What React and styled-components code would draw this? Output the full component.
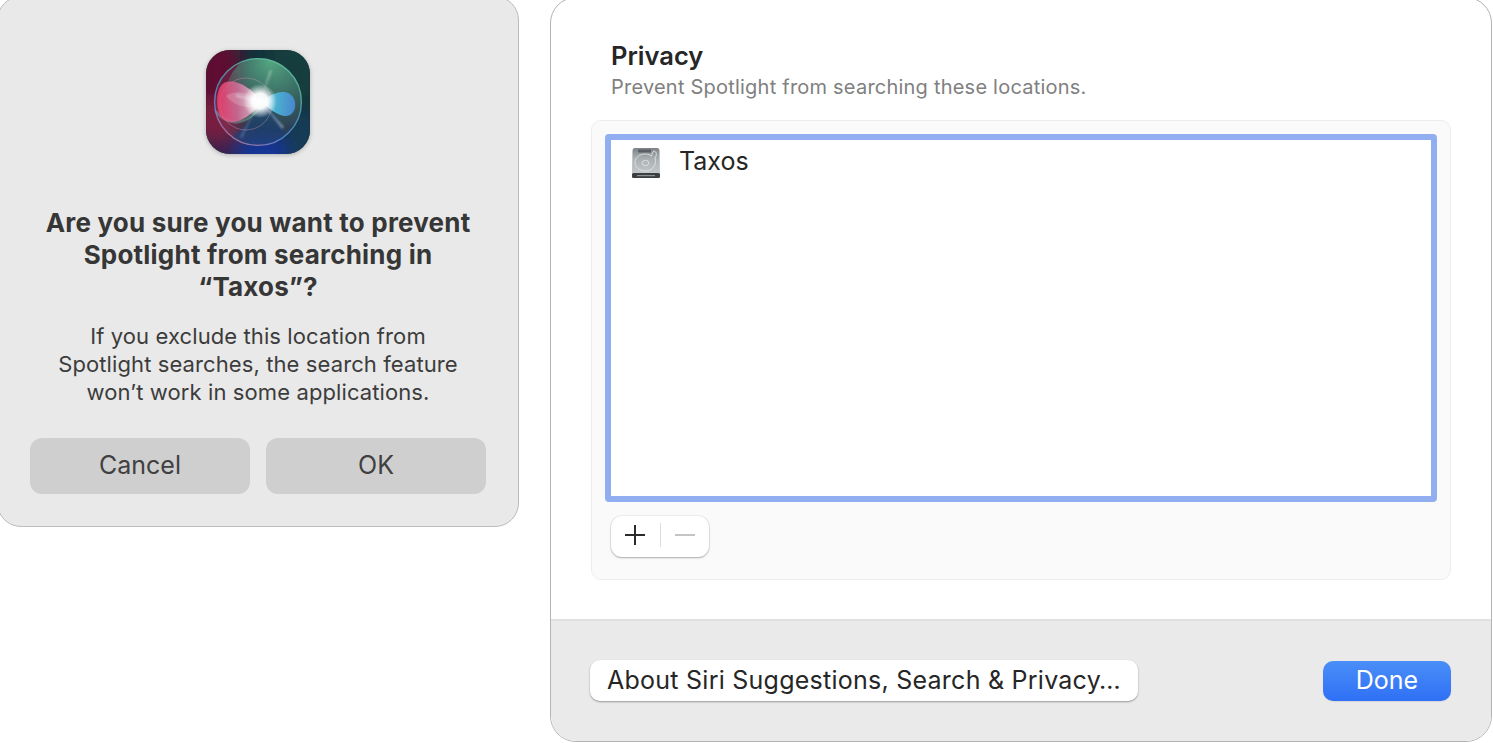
import React from 'react';
import styled, { createGlobalStyle } from 'styled-components';

const GlobalStyle = createGlobalStyle`
  html, body {
    margin: 0;
    padding: 0;
    background: #ffffff;
    overflow: hidden;
  }
  body {
    font-family: 'Inter', 'Liberation Sans', sans-serif;
    -webkit-font-smoothing: antialiased;
  }
`;

const Page = styled.div`
  width: 1493px;
  height: 743px;
  display: flex;
  align-items: flex-start;
  overflow: hidden;
`;

const AlertDialog = styled.div`
  box-sizing: border-box;
  flex: none;
  width: 522px;
  height: 531px;
  margin: -4px 0 0 -3px;
  padding: 53px 33px 32px;
  display: flex;
  flex-direction: column;
  align-items: center;
  background: #e9e9e9;
  border: 1px solid #bcbcbc;
  border-radius: 24px;
`;

const AppIcon = styled.svg`
  width: 104px;
  height: 104px;
  flex: none;
  filter: drop-shadow(0 1px 2px rgba(0, 0, 0, 0.25));
`;

const AlertTitle = styled.h1`
  margin: 53px 0 0;
  font-size: 26px;
  line-height: 32px;
  letter-spacing: 0.2px;
  font-weight: 700;
  color: #363636;
  text-align: center;
  white-space: nowrap;
`;

const AlertBody = styled.p`
  margin: 19px 0 0;
  font-size: 22px;
  line-height: 28px;
  letter-spacing: 0.1px;
  font-weight: 400;
  color: #3c3c3c;
  text-align: center;
  white-space: nowrap;
`;

const AlertActions = styled.div`
  display: flex;
  gap: 16px;
  margin-top: 32px;
`;

const AlertButton = styled.button`
  width: 220px;
  height: 56px;
  border: 0;
  border-radius: 12px;
  background: #cfcfcf;
  color: #404040;
  font-family: inherit;
  font-size: 25px;
  padding: 0 0 2px;
`;

const PrefsPanel = styled.div`
  box-sizing: border-box;
  flex: none;
  width: 942px;
  height: 745px;
  margin: -3px 0 0 31px;
  display: flex;
  flex-direction: column;
  background: #ffffff;
  border: 1px solid #b4b4b4;
  border-radius: 26px;
  overflow: hidden;
`;

const PanelContent = styled.div`
  flex: 1;
  padding: 42px 40px 0;
`;

const SectionTitle = styled.h2`
  margin: 0 0 0 20px;
  font-size: 25.5px;
  line-height: 32px;
  font-weight: 600;
  color: #262626;
`;

const SectionHint = styled.p`
  margin: 2px 0 0 20px;
  font-size: 20px;
  line-height: 26px;
  letter-spacing: 0.22px;
  color: #808080;
`;

const GroupBox = styled.div`
  box-sizing: border-box;
  height: 460px;
  margin-top: 20px;
  padding: 13px;
  background: #fafafa;
  border: 1px solid #ededed;
  border-radius: 10px;
`;

const LocationList = styled.div`
  box-sizing: border-box;
  height: 368px;
  background: #ffffff;
  border: 6px solid #90aef0;
  border-radius: 4px;
`;

const LocationRow = styled.div`
  display: flex;
  align-items: center;
  gap: 18px;
  height: 32px;
  margin-top: 5px;
  padding-left: 20px;
  font-size: 25px;
  color: #262626;
`;

const DiskGlyph = styled.svg`
  flex: none;
  width: 30px;
  height: 30px;
  margin-top: 4px;
`;

const Stepper = styled.div`
  box-sizing: border-box;
  width: 98px;
  height: 41px;
  margin: 14px 0 0 6px;
  display: flex;
  align-items: center;
  background: #ffffff;
  border-radius: 11px;
  box-shadow: 0 0 0 1px rgba(0, 0, 0, 0.05), 0 1px 2px rgba(0, 0, 0, 0.28);
`;

const StepButton = styled.div`
  flex: 1;
  height: 100%;
  padding-bottom: 3px;
  box-sizing: border-box;
  display: flex;
  align-items: center;
  justify-content: center;
  color: ${(p) => (p.$disabled ? '#c4c4c4' : '#2b2b2b')};
`;

const StepDivider = styled.div`
  flex: none;
  width: 1px;
  height: 24px;
  margin-bottom: 3px;
  background: #dcdcdc;
`;

const PanelFooter = styled.div`
  box-sizing: border-box;
  flex: none;
  height: 122px;
  padding: 39px 40px 0 39px;
  display: flex;
  justify-content: space-between;
  align-items: flex-start;
  background: #eaeaea;
  border-top: 2px solid #e0e0e0;
`;

const LinkButton = styled.button`
  box-sizing: border-box;
  width: 548px;
  height: 41px;
  padding: 0 0 1px;
  border: 0;
  border-radius: 10px;
  background: #ffffff;
  color: #262626;
  font-family: inherit;
  font-size: 25px;
  letter-spacing: 0.25px;
  text-align: center;
  white-space: nowrap;
  box-shadow: 0 1px 2px rgba(0, 0, 0, 0.35);
`;

const DoneButton = styled.button`
  width: 128px;
  height: 40px;
  margin-top: 1px;
  padding: 0 0 3px;
  border: 0;
  border-radius: 10px;
  background: linear-gradient(#4a8ef8, #2f70f5);
  color: #ffffff;
  font-family: inherit;
  font-size: 25px;
  box-shadow: 0 1px 1px rgba(0, 0, 0, 0.08);
`;

const SiriIcon = () => (
  <AppIcon viewBox="0 0 104 104">
    <defs>
      <clipPath id="tile">
        <rect width="104" height="104" rx="24" />
      </clipPath>
      <clipPath id="orb">
        <circle cx="52" cy="52" r="44" />
      </clipPath>
      <filter id="soft1" x="-30%" y="-30%" width="160%" height="160%">
        <feGaussianBlur stdDeviation="1" />
      </filter>
      <filter id="soft4" x="-50%" y="-50%" width="200%" height="200%">
        <feGaussianBlur stdDeviation="8" />
      </filter>
      <linearGradient id="ringStroke" x1="0.75" y1="0" x2="0.25" y2="1">
        <stop offset="0" stopColor="#5fc596" />
        <stop offset="0.5" stopColor="#4f9fc0" />
        <stop offset="0.75" stopColor="#5f8fe0" />
        <stop offset="1" stopColor="#c87a9a" />
      </linearGradient>
      <radialGradient id="greenCap" cx="0.55" cy="0.1" r="0.85">
        <stop offset="0" stopColor="#5fbf8f" stopOpacity="0.8" />
        <stop offset="0.6" stopColor="#4fa88c" stopOpacity="0.35" />
        <stop offset="1" stopColor="#5fbf8f" stopOpacity="0" />
      </radialGradient>
      <linearGradient id="pinkLobe" x1="0" y1="0" x2="1" y2="0">
        <stop offset="0" stopColor="#f2426f" />
        <stop offset="0.45" stopColor="#d96f9c" />
        <stop offset="1" stopColor="#ffe6ee" />
      </linearGradient>
      <linearGradient id="blueLobe" x1="0" y1="0" x2="1" y2="0">
        <stop offset="0" stopColor="#bdeeff" />
        <stop offset="0.4" stopColor="#4fbce0" />
        <stop offset="1" stopColor="#4a8cdc" />
      </linearGradient>
      <radialGradient id="spark" cx="0.5" cy="0.5" r="0.5">
        <stop offset="0" stopColor="#ffffff" />
        <stop offset="0.45" stopColor="#ffffff" stopOpacity="0.95" />
        <stop offset="1" stopColor="#ffffff" stopOpacity="0" />
      </radialGradient>
    </defs>
    <g clipPath="url(#tile)">
      <rect width="104" height="104" fill="#12323a" />
      <g filter="url(#soft4)">
        <rect x="-10" y="-10" width="44" height="90" fill="#5e1132" />
        <rect x="-10" y="50" width="40" height="40" fill="#7a1b40" />
        <rect x="64" y="-10" width="50" height="60" fill="#123e3c" />
        <ellipse cx="58" cy="102" rx="30" ry="16" fill="#14349a" />
        <rect x="80" y="62" width="34" height="52" fill="#163a56" />
        <rect x="-6" y="92" width="34" height="20" fill="#3a1a50" />
      </g>
      <g clipPath="url(#orb)">
        <circle cx="52" cy="52" r="44" fill="#b87a94" opacity="0.14" />
        <circle cx="60" cy="44" r="40" fill="url(#greenCap)" />
        <path d="M20 92 C40 76 52 64 56 52 C70 62 84 78 76 100 Z" fill="#17407a" opacity="0.55" />
        <circle cx="40" cy="54" r="26" fill="none" stroke="#e6a4bf" strokeWidth="1" opacity="0.35" />
        <path d="M8 60 C24 78 42 76 58 52" fill="none" stroke="#8fd0c4" strokeWidth="3" opacity="0.35" />
        <path d="M56 52 C44 36 28 28 18 33 C9 38 9 62 17 69 C28 77 44 68 56 52 Z" fill="url(#pinkLobe)" opacity="0.82" />
        <path d="M20 46 C32 38 46 44 60 54 C46 60 30 58 20 46 Z" fill="#ffffff" opacity="0.18" />
        <path d="M56 52 C64 44 76 39 84 44 C91 49 91 61 84 65 C76 69 64 60 56 52 Z" fill="url(#blueLobe)" opacity="0.88" />
      </g>
      <circle cx="52" cy="52" r="43.4" fill="none" stroke="url(#ringStroke)" strokeWidth="1.4" opacity="0.8" />
      <g filter="url(#soft1)">
        <path d="M54 50 L78 77 L76 79 Z" fill="#ffffff" opacity="0.4" />
        <path d="M54 50 L36 88 L34 87 Z" fill="#8fd0ff" opacity="0.3" />
        <path d="M54 51 L64 20 L66 21 Z" fill="#ffffff" opacity="0.35" />
        <path d="M54 51 L30 44 L30 47 Z" fill="#ffffff" opacity="0.35" />
      </g>
      <circle cx="54" cy="51" r="17" fill="url(#spark)" />
    </g>
  </AppIcon>
);

const DiskIcon = () => (
  <DiskGlyph viewBox="0 0 30 30">
    <defs>
      <linearGradient id="diskBody" x1="0" y1="0" x2="0" y2="1">
        <stop offset="0" stopColor="#7e8387" />
        <stop offset="0.35" stopColor="#a9aeb1" />
        <stop offset="1" stopColor="#cdd1d3" />
      </linearGradient>
    </defs>
    <path d="M4 0 H26 Q28.5 0 28.5 3 L29 24 V29 Q29 30 28 30 H2 Q1 30 1 29 V24 L1.5 3 Q1.5 0 4 0 Z" fill="url(#diskBody)" />
    <rect x="7" y="1.5" width="13" height="3" rx="0.5" fill="#5c6064" />
    <path d="M23 3 C26 4 26 7 24 10 C26 16 22 23 14.5 23 C8 23 4 19 4 14.5 C4 9 9 6 14.5 6 C17 6 19 7 20.5 8 C21 6 21.5 4 23 3 Z" fill="none" stroke="#dfe3e5" strokeWidth="0.9" />
    <ellipse cx="14.5" cy="15" rx="3.4" ry="2.6" fill="none" stroke="#dfe3e5" strokeWidth="0.9" />
    <rect x="1" y="25" width="28" height="5" rx="1.5" fill="#3c3f42" />
    <rect x="6" y="27" width="18" height="1.2" fill="#8d9194" />
  </DiskGlyph>
);

const PlusIcon = () => (
  <svg width="22" height="22" viewBox="0 0 22 22">
    <path d="M11 1 V21 M1 11 H21" stroke="currentColor" strokeWidth="2" fill="none" />
  </svg>
);

const MinusIcon = () => (
  <svg width="22" height="22" viewBox="0 0 22 22">
    <path d="M1 11 H21" stroke="currentColor" strokeWidth="2" fill="none" />
  </svg>
);

export default function App() {
  return (
    <>
      <GlobalStyle />
      <Page>
        <AlertDialog>
          <SiriIcon />
          <AlertTitle>
            Are you sure you want to prevent
            <br />
            Spotlight from searching in
            <br />
            “Taxos”?
          </AlertTitle>
          <AlertBody>
            If you exclude this location from
            <br />
            Spotlight searches, the search feature
            <br />
            won’t work in some applications.
          </AlertBody>
          <AlertActions>
            <AlertButton>Cancel</AlertButton>
            <AlertButton>OK</AlertButton>
          </AlertActions>
        </AlertDialog>
        <PrefsPanel>
          <PanelContent>
            <SectionTitle>Privacy</SectionTitle>
            <SectionHint>Prevent Spotlight from searching these locations.</SectionHint>
            <GroupBox>
              <LocationList>
                <LocationRow>
                  <DiskIcon />
                  Taxos
                </LocationRow>
              </LocationList>
              <Stepper>
                <StepButton>
                  <PlusIcon />
                </StepButton>
                <StepDivider />
                <StepButton $disabled>
                  <MinusIcon />
                </StepButton>
              </Stepper>
            </GroupBox>
          </PanelContent>
          <PanelFooter>
            <LinkButton>About Siri Suggestions, Search &amp; Privacy…</LinkButton>
            <DoneButton>Done</DoneButton>
          </PanelFooter>
        </PrefsPanel>
      </Page>
    </>
  );
}
